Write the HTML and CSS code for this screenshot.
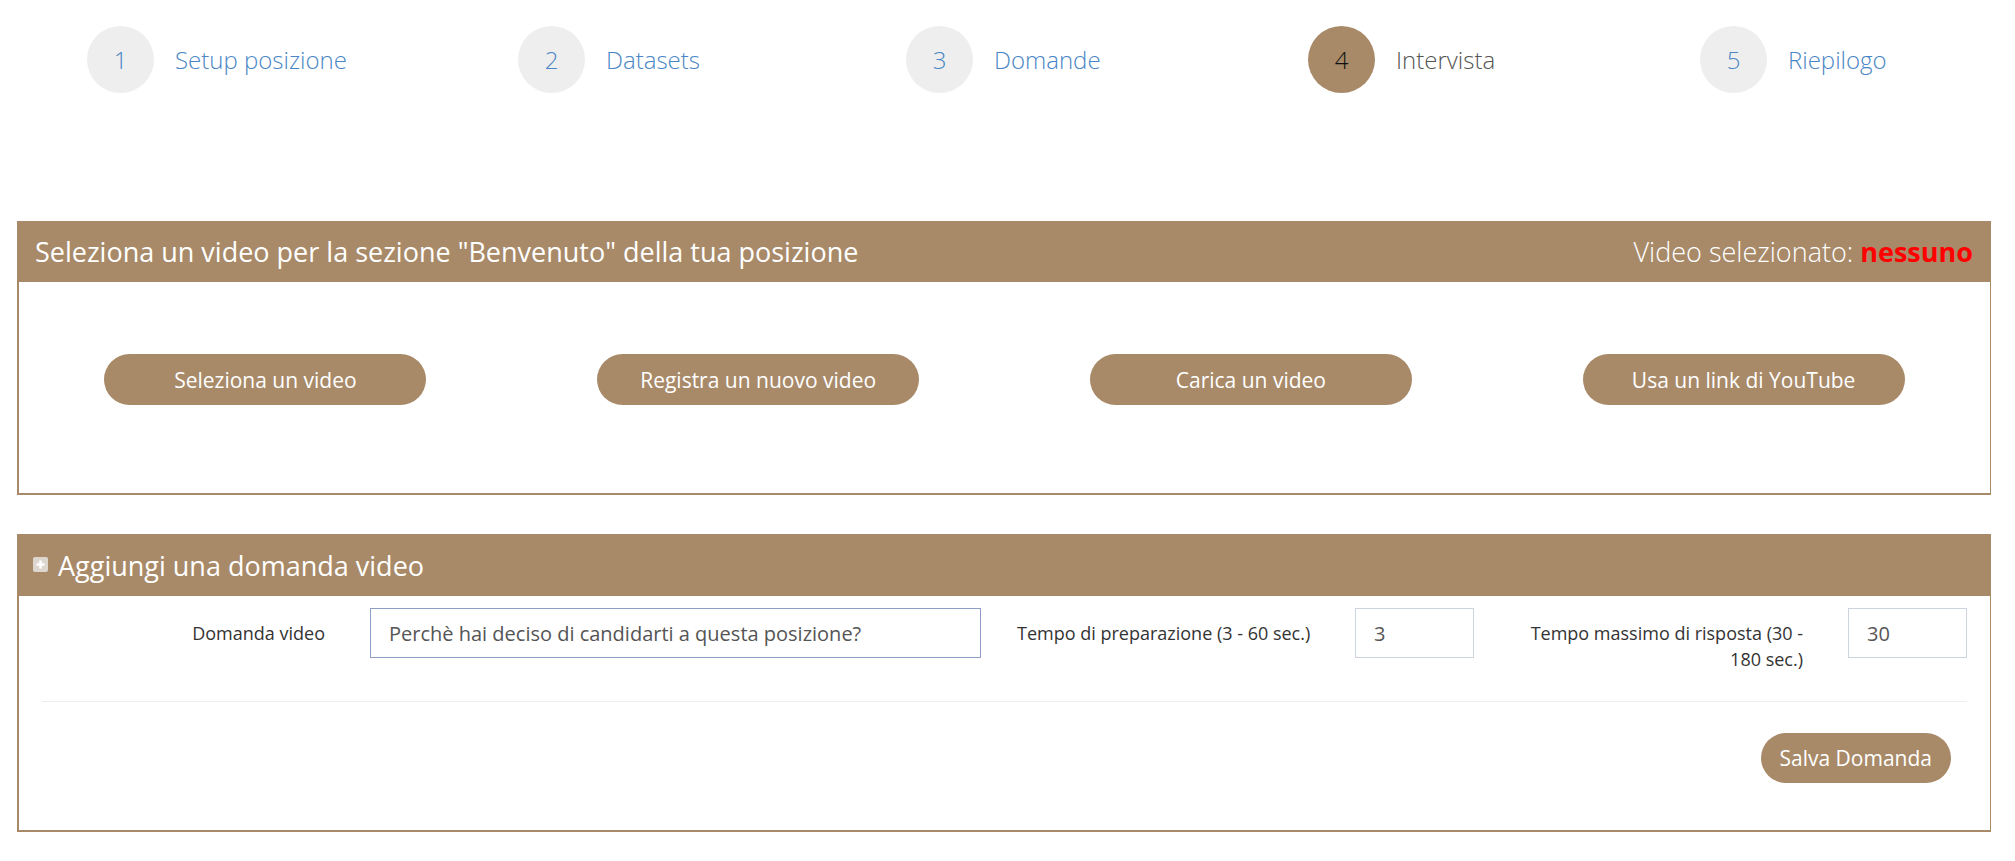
FILE: index.html
```html
<!DOCTYPE html>
<html lang="it">
<head>
  <meta charset="UTF-8">
  <meta name="viewport" content="width=device-width, initial-scale=1.0">
  <title>Nuova posizione - Intervista</title>
  <link rel="stylesheet" href="styles.css">
</head>
<body>

  <div class="steps">
    <div class="step"><span class="step-num">1</span><span class="step-label">Setup posizione</span></div>
    <div class="step"><span class="step-num">2</span><span class="step-label">Datasets</span></div>
    <div class="step"><span class="step-num">3</span><span class="step-label">Domande</span></div>
    <div class="step active"><span class="step-num">4</span><span class="step-label">Intervista</span></div>
    <div class="step"><span class="step-num">5</span><span class="step-label">Riepilogo</span></div>
  </div>

  <div class="panel">
    <div class="panel-heading">
      <span>Seleziona un video per la sezione "Benvenuto" della tua posizione</span>
      <span class="selected">Video selezionato: <b>nessuno</b></span>
    </div>
    <div class="panel-body video-actions">
      <div class="col"><button class="btn">Seleziona un video</button></div>
      <div class="col"><button class="btn">Registra un nuovo video</button></div>
      <div class="col"><button class="btn">Carica un video</button></div>
      <div class="col"><button class="btn">Usa un link di YouTube</button></div>
    </div>
  </div>

  <div class="panel">
    <div class="panel-heading left">
      <span class="plus-icon">
        <svg width="15" height="15" viewBox="0 0 15 15">
          <rect width="15" height="15" rx="2" fill="#ddd6ce"/>
          <path d="M7.5 3.5v8M3.5 7.5h8" stroke="#fff" stroke-width="2.6"/>
        </svg>
      </span>
      <span>Aggiungi una domanda video</span>
    </div>
    <div class="panel-body question-form">
      <div class="form-row">
        <label class="control-label">Domanda video</label>
        <input class="form-control focus" type="text" value="Perchè hai deciso di candidarti a questa posizione?">
        <label class="control-label nowrap">Tempo di preparazione (3 - 60 sec.)</label>
        <input class="form-control" type="text" value="3">
        <label class="control-label">Tempo massimo di risposta (30 - 180 sec.)</label>
        <input class="form-control" type="text" value="30">
      </div>
      <hr>
      <div class="form-footer">
        <button class="btn">Salva Domanda</button>
      </div>
    </div>
  </div>

</body>
</html>
```

FILE: styles.css
```css
body {
  margin: 0;
  padding: 0 24px 0 17px;
  background: #ffffff;
  font-family: 'Open Sans', 'Noto Sans', sans-serif;
  color: #333;
}

/* barra dei passi */
.steps {
  display: grid;
  grid-template-columns: 431px 388px 402px 392px auto;
  padding: 26px 0 0 70px;
  margin-bottom: 128px;
}

.step {
  display: flex;
  align-items: center;
  gap: 21px;
}

.step-num {
  width: 67px;
  height: 67px;
  border-radius: 50%;
  background: #eeeeee;
  color: #4a86c5;
  display: flex;
  align-items: center;
  justify-content: center;
  font-size: 24px;
  font-weight: 300;
}

.step-label {
  color: #4a86c5;
  font-size: 24px;
  font-weight: 300;
}

.step.active .step-num {
  background: #a88a69;
  color: #111;
}

.step.active .step-label {
  color: #555;
}

/* pannelli */
.panel {
  border: solid #a88a69;
  border-width: 0 1px 2px 2px;
  margin-bottom: 39px;
}

.panel-heading {
  background: #a88a69;
  color: #fff;
  height: 61px;
  padding: 0 17px 0 16px;
  display: flex;
  align-items: center;
  justify-content: space-between;
  font-size: 27px;
}

.panel-heading.left {
  height: 62px;
  justify-content: flex-start;
  gap: 10px;
  padding-left: 14px;
}

.plus-icon {
  display: flex;
  margin-top: -1px;
}

.selected {
  font-weight: 300;
}

.selected b {
  color: #ff0000;
  font-weight: 700;
}

.btn {
  background: #a88a69;
  color: #fff;
  border: none;
  border-radius: 26px;
  height: 51px;
  font-family: inherit;
  font-size: 21px;
  cursor: pointer;
}

.video-actions {
  display: grid;
  grid-template-columns: repeat(4, 1fr);
  padding: 72px 0 88px;
}

.video-actions .col {
  display: flex;
  justify-content: center;
}

.video-actions .btn {
  width: 322px;
}

/* form domanda */
.question-form {
  padding: 12px 23px 0;
}

.form-row {
  display: grid;
  grid-template-columns: 292px 611px 302px 119px 302px 119px;
  column-gap: 36px;
  align-items: start;
}

.control-label {
  text-align: right;
  padding: 12px 9px 0 0;
  font-size: 18px;
  line-height: 26px;
  color: #333;
}

.control-label.nowrap {
  white-space: nowrap;
  text-align: left;
  padding-right: 0;
}

.form-control {
  box-sizing: border-box;
  height: 50px;
  padding: 0 18px;
  border: 1px solid #cdd3df;
  font-family: inherit;
  font-size: 20px;
  color: #555;
  outline: none;
}

.form-control.focus {
  border-color: #8f9ec4;
}

hr {
  border: none;
  border-top: 1px solid #eeeeee;
  margin: 29px 0 0;
}

.form-footer {
  display: flex;
  justify-content: flex-end;
  padding: 31px 16px 47px 0;
}

.form-footer .btn {
  height: 50px;
  padding: 0 19px;
}
```
